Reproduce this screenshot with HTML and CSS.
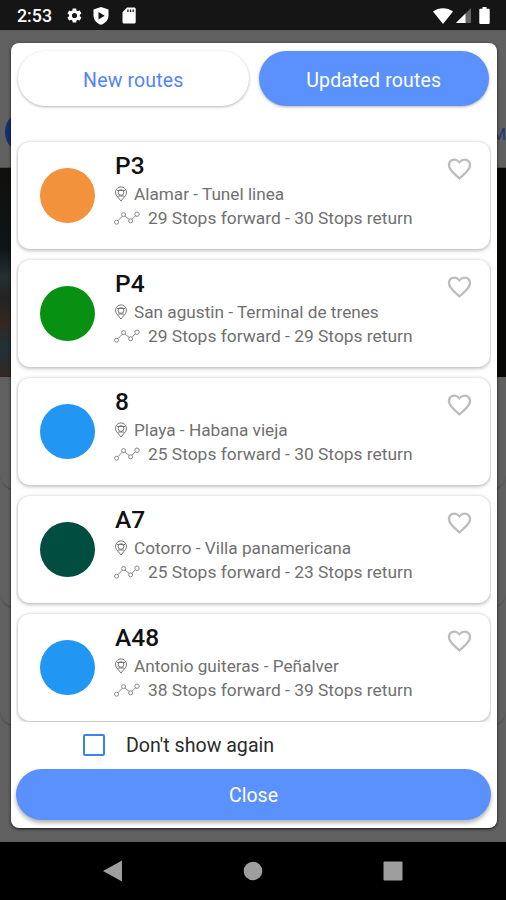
FILE: index.html
```html
<!DOCTYPE html>
<html lang="en">
<head>
    <meta charset="UTF-8">
    <meta name="viewport" content="width=device-width, initial-scale=1.0">
    <title>Updated routes</title>
    <link rel="stylesheet" href="styles.css">
</head>
<body>
    <svg class="sprite">
        <symbol id="heart" viewBox="0 0 24 24">
            <path d="M16.5 3c-1.74 0-3.41.81-4.5 2.09C10.91 3.81 9.24 3 7.5 3 4.42 3 2 5.42 2 8.5c0 3.78 3.4 6.86 8.55 11.54L12 21.35l1.45-1.32C18.6 15.36 22 12.28 22 8.5 22 5.42 19.58 3 16.5 3zm-4.4 15.55l-.1.1-.1-.1C7.14 14.24 4 11.39 4 8.5 4 6.500 5.500 5 7.500 5c1.540 0 3.040.99 4.500 2.800C13.460 5.990 14.960 5 16.500 5c2 0 3.500 1.500 3.500 3.500 0 2.890-3.140 5.740-7.900 10.050z"/>
        </symbol>
        <symbol id="pin" viewBox="0 0 14 16">
            <path d="M7 15L2.600 9.700A5.500 5.500 0 1 1 11.400 9.700Z"/>
            <path d="M3 4.500h8M4.200 6.500a2.800 2.800 0 0 0 5.600 0a2.800 2.800 0 0 0-5.600 0M4 10h6"/>
        </symbol>
        <symbol id="stops" viewBox="0 0 26 14">
            <circle cx="2.600" cy="11.200" r="2"/>
            <circle cx="9.600" cy="3.600" r="2"/>
            <circle cx="16.600" cy="9.800" r="2"/>
            <circle cx="23" cy="3.200" r="2.200"/>
            <path d="M4 9.600l4.200-4.400M11 5.200l4.200 3.200M18 8.200l3.600-3.600"/>
        </symbol>
    </svg>

    <header class="status-bar">
        <span class="time">2:53</span>
        <svg class="status-gear" viewBox="0 0 24 24"><path d="M19.4 13c0-.3.1-.6.1-1s0-.7-.1-1l2.1-1.6c.2-.2.3-.4.1-.7l-2-3.4c-.1-.2-.4-.3-.6-.2l-2.5 1c-.5-.4-1.1-.7-1.7-1l-.4-2.6c0-.3-.2-.5-.5-.5h-4c-.2 0-.4.2-.5.5L9 5.100c-.6.3-1.2.6-1.7 1l-2.5-1c-.2-.1-.5 0-.6.2l-2 3.4c-.1.2-.1.5.1.7L4.5 11c0 .3-.1.7-.1 1s0 .7.1 1l-2.2 1.6c-.2.2-.2.4-.1.7l2 3.4c.1.2.4.3.6.2l2.5-1c.5.4 1.1.7 1.700 1l.4 2.600c0 .3.3.5.5.5h4c.3 0 .5-.2.5-.5l.4-2.600c.6-.3 1.200-.6 1.700-1l2.500 1c.2.1.5 0 .6-.2l2-3.400c.1-.2.1-.5-.1-.7zM12 15.600a3.600 3.600 0 1 1 0-7.200 3.600 3.600 0 0 1 0 7.200z" fill-rule="evenodd"/></svg>
        <svg class="status-shield" viewBox="0 0 16 18"><path fill-rule="evenodd" d="M8 0l7.500 2.500v6c0 4.200-3 7.800-7.500 9.300C3.500 16.300.5 12.700.5 8.500v-6zM5.500 5v7.500L11.700 8.700z"/></svg>
        <svg class="status-sd" viewBox="0 0 14 17"><path fill-rule="evenodd" d="M5 .5h7.200c.8 0 1.500.7 1.500 1.500v13c0 .8-.7 1.500-1.500 1.500H2c-.8 0-1.500-.7-1.500-1.500V5.200zM5.300 2.600v2.300h1.300V2.600zm2.600 0v2.300h1.300V2.600zm2.600 0v2.300h1.300V2.600z"/></svg>
        <svg class="status-wifi" viewBox="0 0 20 16"><path d="M0 3.600C5.500-.9 14.500-.9 20 3.600L10 16z"/></svg>
        <svg class="status-signal" viewBox="0 0 15 15"><path d="M15 0v15H0z" opacity=".35"/><path d="M9.500 5.500V15H0z"/></svg>
        <svg class="status-battery" viewBox="0 0 11 17"><path d="M3.500 0h4v1.700h2c.8 0 1.200.5 1.200 1.200v12.800c0 .8-.5 1.300-1.200 1.300h-8c-.8 0-1.200-.5-1.200-1.300V2.900c0-.7.4-1.200 1.200-1.200h2z"/></svg>
    </header>

    <main class="screen">
        <!-- home page dimmed behind the dialog -->
        <div class="page">
            <div class="page-tabs">
                <span class="page-tab"></span>
                <span class="page-more">M</span>
            </div>
            <div class="page-photo"></div>
            <div class="page-row"></div>
            <div class="page-row"></div>
            <div class="page-row"></div>
        </div>

        <div class="dialog">
            <div class="tabs">
                <button class="tab">New routes</button>
                <button class="tab active">Updated routes</button>
            </div>

            <div class="routes">
                <div class="route">
                    <span class="dot orange"></span>
                    <div class="info">
                        <h2>P3</h2>
                        <p class="ends"><svg class="pin"><use href="#pin"/></svg><span>Alamar - Tunel linea</span></p>
                        <p class="stops"><svg class="path"><use href="#stops"/></svg><span>29 Stops forward - 30 Stops return</span></p>
                    </div>
                    <svg class="heart"><use href="#heart"/></svg>
                </div>
                <div class="route">
                    <span class="dot green"></span>
                    <div class="info">
                        <h2>P4</h2>
                        <p class="ends"><svg class="pin"><use href="#pin"/></svg><span>San agustin - Terminal de trenes</span></p>
                        <p class="stops"><svg class="path"><use href="#stops"/></svg><span>29 Stops forward - 29 Stops return</span></p>
                    </div>
                    <svg class="heart"><use href="#heart"/></svg>
                </div>
                <div class="route">
                    <span class="dot blue"></span>
                    <div class="info">
                        <h2>8</h2>
                        <p class="ends"><svg class="pin"><use href="#pin"/></svg><span>Playa - Habana vieja</span></p>
                        <p class="stops"><svg class="path"><use href="#stops"/></svg><span>25 Stops forward - 30 Stops return</span></p>
                    </div>
                    <svg class="heart"><use href="#heart"/></svg>
                </div>
                <div class="route">
                    <span class="dot teal"></span>
                    <div class="info">
                        <h2>A7</h2>
                        <p class="ends"><svg class="pin"><use href="#pin"/></svg><span>Cotorro - Villa panamericana</span></p>
                        <p class="stops"><svg class="path"><use href="#stops"/></svg><span>25 Stops forward - 23 Stops return</span></p>
                    </div>
                    <svg class="heart"><use href="#heart"/></svg>
                </div>
                <div class="route">
                    <span class="dot blue"></span>
                    <div class="info">
                        <h2>A48</h2>
                        <p class="ends"><svg class="pin"><use href="#pin"/></svg><span>Antonio guiteras - Peñalver</span></p>
                        <p class="stops"><svg class="path"><use href="#stops"/></svg><span>38 Stops forward - 39 Stops return</span></p>
                    </div>
                    <svg class="heart"><use href="#heart"/></svg>
                </div>
            </div>

            <div class="again">
                <span class="checkbox"></span>
                <span>Don't show again</span>
            </div>
            <button class="close">Close</button>
        </div>
    </main>

    <nav class="nav-bar">
        <svg viewBox="0 0 20 22"><path d="M19 .5v21L0 11z"/></svg>
        <svg viewBox="0 0 20 22"><circle cx="10" cy="11" r="9.300"/></svg>
        <svg viewBox="0 0 20 22"><rect x=".5" y="1.500" width="19" height="19" rx="1"/></svg>
    </nav>
</body>
</html>
```

FILE: styles.css
```css
* {
    box-sizing: border-box;
}

body {
    margin: 0;
    width: 506px;
    height: 900px;
    display: flex;
    flex-direction: column;
    overflow: hidden;
    background: #000;
    font-family: Roboto, sans-serif;
}

h2, p {
    margin: 0;
    font-weight: 400;
}

button {
    border: none;
    padding: 0;
    font-family: inherit;
}

.sprite {
    display: none;
}

/* status bar */
.status-bar {
    height: 30px;
    flex: none;
    display: flex;
    align-items: center;
    padding: 1px 16px 0 17px;
    background: #151515;
    color: #fff;
    fill: #fff;
}

.time {
    width: 49px;
    font-size: 17.8px;
    font-weight: 500;
}

.status-gear {
    width: 17px;
    height: 17px;
}

.status-shield {
    width: 16px;
    height: 18px;
    margin-left: 10px;
}

.status-sd {
    width: 14px;
    height: 17px;
    margin-left: 13px;
}

.status-wifi {
    width: 20px;
    height: 16px;
    margin-left: auto;
}

.status-signal {
    width: 15px;
    height: 15px;
    margin-left: 3px;
}

.status-battery {
    width: 11px;
    height: 17px;
    margin-left: 8px;
}

/* dimmed page */
.screen {
    position: relative;
    height: 812px;
    flex: none;
}

.page {
    height: 812px;
    padding-top: 67px;
    overflow: hidden;
    background: #606060;
}

.page-tabs {
    height: 71px;
    display: flex;
    align-items: center;
    justify-content: space-between;
    border-bottom: 1px solid #4b4b4b;
}

.page-tab {
    width: 60px;
    height: 44px;
    margin-left: 5px;
    border-radius: 22px;
    background: #162e72;
}

.page-more {
    padding-top: 4px;
    color: #26376f;
    font-size: 17px;
}

.page-photo {
    height: 209px;
    background: linear-gradient(90deg, transparent 50%, #080806 50%), linear-gradient(#10100e 0%, #101416 38%, #252f31 52%, #242426 62%, #332721 75%, #213039 85%, #302824 100%);
}

.page-row {
    height: 118px;
    border-bottom: 2px solid #505050;
    border-radius: 0 0 16px 16px;
}

.page-photo + .page-row {
    height: 114px;
}

/* dialog */
.dialog {
    position: absolute;
    top: 13px;
    left: 11px;
    width: 486px;
    height: 785px;
    padding: 8px 6px 0 5px;
    border-radius: 8px;
    background: #fff;
    box-shadow: 0 1px 3px rgba(0, 0, 0, 0.8);
}

.tabs {
    display: flex;
    gap: 10px;
    padding: 0 2px;
}

.tab {
    flex: 1;
    height: 55px;
    border-radius: 28px;
    background: #fff;
    color: #5285f4;
    font-size: 19.5px;
    letter-spacing: 0.15px;
    padding-top: 3px;
    box-shadow: 0 1px 3px rgba(0, 0, 0, 0.3);
}

.tab.active {
    background: #5a91fd;
    color: #fff;
}

.routes {
    height: 616px;
    padding: 36px 1px 0 2px;
    overflow: hidden;
}

.route {
    display: flex;
    height: 107px;
    margin-bottom: 11px;
    padding: 0 16px 0 22px;
    border-radius: 12px;
    background: #fff;
    box-shadow: 0 1px 4px rgba(0, 0, 0, 0.35);
}

.dot {
    width: 55px;
    height: 55px;
    margin-top: 26px;
    flex: none;
    border-radius: 50%;
}

.orange {
    background: #f2923c;
}

.green {
    background: #089012;
}

.blue {
    background: #2296f3;
}

.teal {
    background: #014e41;
}

.info {
    flex: 1;
    margin-left: 20px;
    padding-top: 8px;
    color: #707070;
}

.info h2 {
    height: 32px;
    line-height: 32px;
    color: #111;
    font-size: 24.5px;
    font-weight: 500;
}

.info p {
    display: flex;
    align-items: center;
    height: 24px;
    white-space: nowrap;
}

.ends {
    font-size: 17.2px;
}

.stops {
    font-size: 17.4px;
}

.pin {
    width: 14px;
    height: 16px;
    margin: 0 6px 0 -1px;
    fill: none;
    stroke: #777;
}

.path {
    width: 26px;
    height: 14px;
    margin: 0 8px 0 -1px;
    fill: none;
    stroke: #888;
}

.heart {
    width: 29px;
    height: 28px;
    margin-top: 13px;
    flex: none;
    fill: #bdbdbd;
}

.again {
    display: flex;
    align-items: center;
    gap: 21px;
    height: 47px;
    padding: 0 0 1px 67px;
    color: #2a2a2a;
    font-size: 19.6px;
}

.checkbox {
    width: 22px;
    height: 22px;
    border: 2px solid #3d83f0;
    border-radius: 2px;
}

.close {
    display: block;
    width: 475px;
    height: 51px;
    border-radius: 26px;
    background: #5a91fd;
    color: #fff;
    font-size: 19.5px;
    padding-top: 2px;
    box-shadow: 0 3px 4px rgba(0, 0, 0, 0.3);
}

/* android buttons */
.nav-bar {
    height: 58px;
    display: flex;
    justify-content: space-between;
    align-items: center;
    padding: 0 103px;
    fill: #9e9e9e;
}

.nav-bar svg {
    width: 20px;
    height: 22px;
}
```
